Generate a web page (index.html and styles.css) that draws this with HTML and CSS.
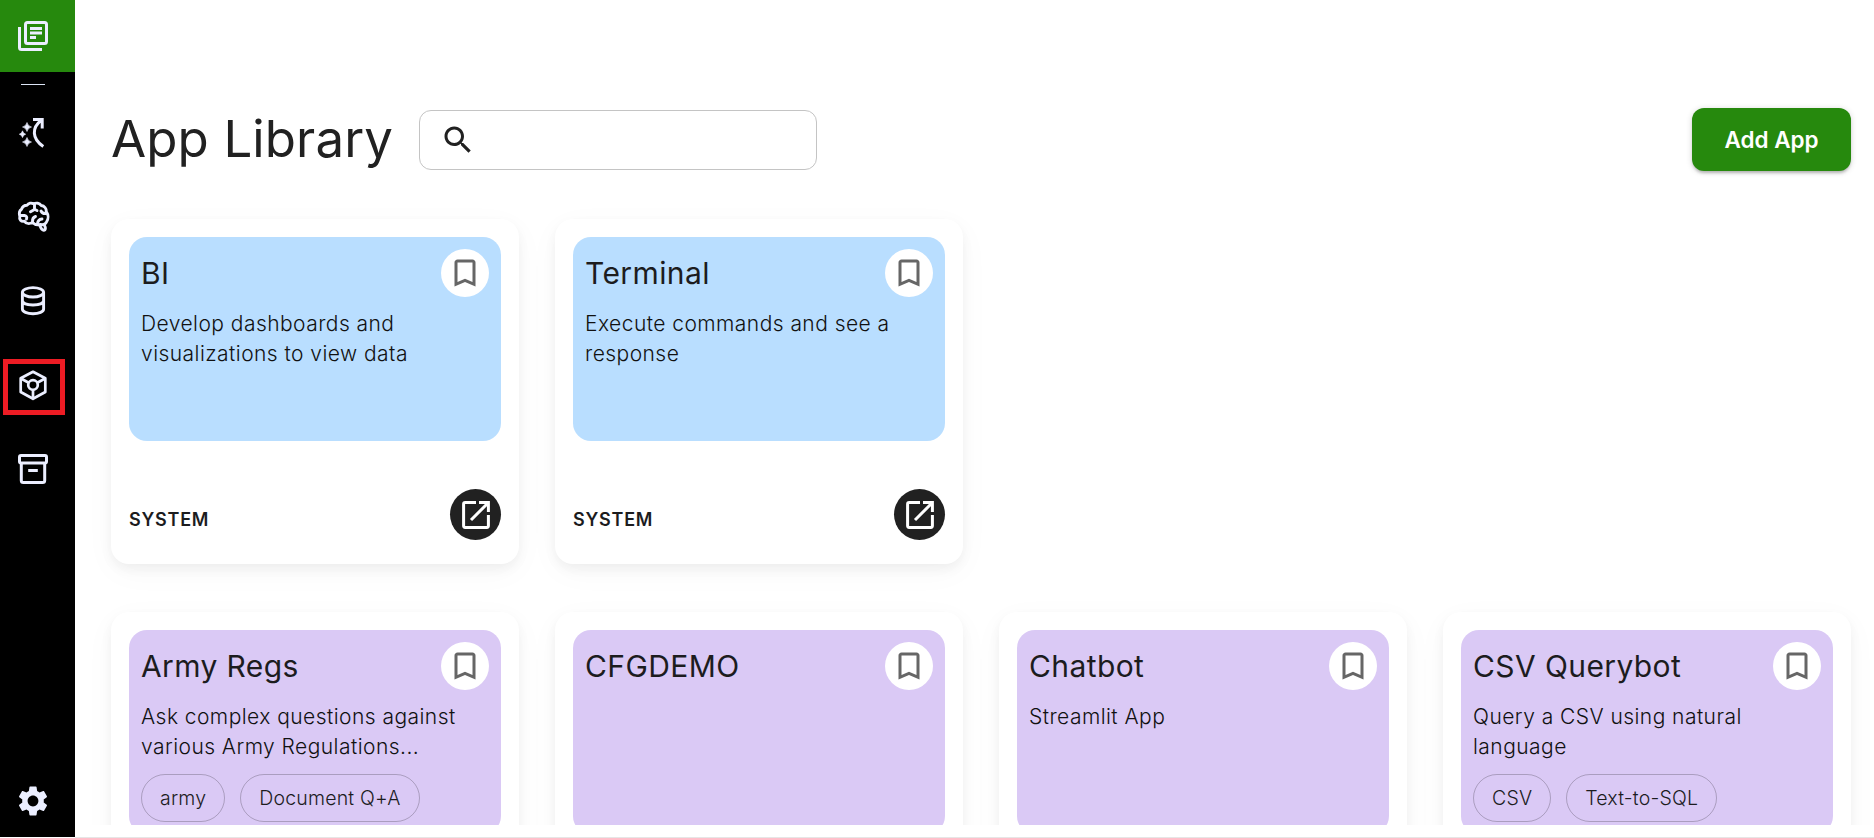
FILE: index.html
```
<!DOCTYPE html>
<html lang="en">
<head>
<meta charset="utf-8">
<title>App Library</title>
<link rel="stylesheet" href="styles.css">
</head>
<body>
<svg class="defs" width="0" height="0">
  <symbol id="bookmark" viewBox="0 0 24 24"><path d="M17 3H7c-1.1 0-2 .9-2 2v16l7-3 7 3V5c0-1.1-.9-2-2-2zm0 15-5-2.18L7 18V5h10v13z"/></symbol>
  <symbol id="launch" viewBox="0 0 28 28"><g fill="none" stroke="#fff" stroke-width="3"><path d="M14 1.6H3.2Q1.6 1.6 1.6 3.2V24.8Q1.6 26.4 3.2 26.4H24.8Q26.4 26.4 26.4 24.8V14"/><path d="M17 1.6H26.4V11M26 2 9 19"/></g></symbol>
</svg>
<div class="app">
  <nav class="sidebar">
    <a class="nav-item active"><svg viewBox="0 0 36 36"><g fill="none" stroke="#ebeeff" stroke-width="3"><path d="M4.5 9V29.5Q4.5 31.5 6.5 31.5H27"/><rect x="10.500" y="4.500" width="21" height="21" rx="2"/><path d="M15 10.500H27M15 15H27M15 19.500H21"/></g></svg></a>
    <span class="divider"></span>
    <a class="nav-item"><svg viewBox="0 0 36 36"><path fill="none" stroke="#ebeeff" stroke-width="3" d="M28.300 31.500C16.500 23.500 17 12.500 26 5.500M18 4.500H27.200V13.500"/><path fill="#ebeeff" stroke="#ebeeff" stroke-width=".6" d="M12 8q.9 3.600 4.500 4.500-3.600.9-4.500 4.500-.9-3.600-4.500-4.500 3.600-.9 4.500-4.500zM12 23q.9 3.600 4.500 4.500-3.600.9-4.500 4.500-.9-3.600-4.500-4.500 3.600-.9 4.500-4.500zM7.500 16.300q.6 2.800 3.200 3.400-2.600.6-3.200 3.400-.6-2.800-3.200-3.400 2.600-.6 3.200-3.400z" transform="translate(0 -.5)"/></svg></a>
    <a class="nav-item"><svg viewBox="0 0 36 36"><g fill="none" stroke="#ebeeff" stroke-width="2.900" stroke-linecap="round" stroke-linejoin="round"><path d="M12 6.200C13.500 4 16.500 3.600 18.500 4.800C21 3.600 24.500 4 26.200 6.500C29.500 7 31.500 9.500 31.300 12.500C33.500 15.500 33.600 20 31.500 23C30.500 25.300 28 26 25.500 25.500C22.500 26.300 19.500 25.500 17.500 23.500C14.500 25 11 24.800 9.500 22.200C6 23 4 20.500 4.800 17.300C4 14.500 4.500 11.500 6.500 10.200C7.500 7.500 9.500 6.200 12 6.200Z"/><path d="M25 27C26 29.500 27 31 28.800 31.200S31 29 29.500 26.500"/><path d="M19.500 5.500V10.500L15.500 12.800M19.500 10.300 22 11.500M5.500 16.500H9.500Q12.500 17 11.500 20M17.500 22.500Q17.300 18.500 20.500 17.500M31 14.500Q27.500 15 26 12M22.500 24.500Q23 20.500 27 20"/></g></svg></a>
    <a class="nav-item"><svg viewBox="0 0 36 36"><g fill="none" stroke="#ebeeff" stroke-width="2.900"><ellipse cx="18" cy="9.300" rx="10.600" ry="4.700"/><path d="M7.400 9.300V26C7.400 28.700 12 30.700 18 30.700S28.600 28.700 28.600 26V9.300M7.400 17.600C7.400 20.300 12 22 18 22S28.600 20.300 28.600 17.600"/></g></svg></a>
    <a class="nav-item outlined"><svg viewBox="0 0 36 36"><g fill="none" stroke="#ebeeff" stroke-width="2.700" stroke-linejoin="round"><path d="M18 4.800 30.300 11.300V25L18 31.800 5.700 25V11.300Z"/><circle cx="18" cy="18" r="4.800"/><path d="M6 11.500 13.700 15.700M30 11.500 22.300 15.700M18 23V31.500"/></g></svg></a>
    <a class="nav-item"><svg viewBox="0 0 36 36"><g fill="none" stroke="#ebeeff" stroke-width="3"><rect x="4.500" y="4.500" width="27" height="7.500" rx="1.500"/><path d="M6.300 12V29.500Q6.300 31.600 8.400 31.600H27.600Q29.700 31.600 29.700 29.500V12M13.200 19.500H22.800"/></g></svg></a>
    <a class="nav-item settings"><svg viewBox="0 0 24 24" fill="#ebeeff"><path d="M19.140 12.940c.04-.3.060-.61.060-.94 0-.32-.02-.64-.07-.94l2.030-1.580c.18-.14.230-.41.120-.61l-1.920-3.320c-.12-.22-.37-.29-.59-.22l-2.390.96c-.5-.38-1.030-.7-1.620-.94l-.36-2.540c-.04-.24-.24-.41-.48-.41h-3.840c-.24 0-.43.170-.47.410l-.36 2.540c-.59.240-1.130.570-1.620.94l-2.390-.96c-.22-.08-.47 0-.59.220L2.740 8.870c-.12.210-.08.470.120.610l2.030 1.580c-.05.300-.09.630-.09.940s.02.640.07.940l-2.030 1.580c-.18.140-.23.410-.12.610l1.920 3.320c.12.220.37.290.59.220l2.390-.96c.5.380 1.030.7 1.620.94l.36 2.540c.05.240.24.410.48.410h3.840c.24 0 .44-.17.470-.41l.36-2.540c.59-.24 1.130-.56 1.620-.94l2.390.96c.22.080.47 0 .59-.22l1.920-3.320c.12-.22.070-.47-.12-.61l-2.010-1.580zM12 15.600c-1.980 0-3.600-1.620-3.600-3.600s1.620-3.600 3.600-3.600 3.600 1.620 3.600 3.600-1.620 3.600-3.600 3.600z"/></svg></a>
  </nav>
  <main class="content">
    <div class="scroll">
      <header class="page-head">
        <h1 class="page-title">App Library</h1>
        <label class="search"><svg viewBox="0 0 24 24"><path fill="#212121" d="M15.500 14h-.79l-.28-.27C15.410 12.590 16 11.110 16 9.500 16 5.910 13.090 3 9.500 3S3 5.910 3 9.500 5.910 16 9.500 16c1.610 0 3.090-.59 4.230-1.570l.27.280v.79l5 4.990L20.490 19l-4.990-5zm-6 0C7.010 14 5 11.990 5 9.500S7.010 5 9.500 5 14 7.010 14 9.500 11.990 14 9.500 14z"/></svg><input class="search-input" type="text" aria-label="Search"></label>
        <button class="add-btn">Add App</button>
      </header>
      <section class="grid">
        <article class="card">
          <div class="tile blue"><div class="tile-head"><h2 class="name">BI</h2><span class="mark"><svg><use href="#bookmark"/></svg></span></div><p class="desc">Develop dashboards and visualizations to view data</p></div>
          <div class="card-foot"><span class="kind">SYSTEM</span><span class="open"><svg><use href="#launch"/></svg></span></div>
        </article>
        <article class="card">
          <div class="tile blue"><div class="tile-head"><h2 class="name">Terminal</h2><span class="mark"><svg><use href="#bookmark"/></svg></span></div><p class="desc">Execute commands and see a response</p></div>
          <div class="card-foot"><span class="kind">SYSTEM</span><span class="open"><svg><use href="#launch"/></svg></span></div>
        </article>
      </section>
      <section class="grid">
        <article class="card">
          <div class="tile purple"><div class="tile-head"><h2 class="name">Army Regs</h2><span class="mark"><svg><use href="#bookmark"/></svg></span></div><p class="desc">Ask complex questions against various Army Regulations...</p><div class="chips"><span class="chip">army</span><span class="chip">Document Q+A</span></div></div>
        </article>
        <article class="card">
          <div class="tile purple"><div class="tile-head"><h2 class="name">CFGDEMO</h2><span class="mark"><svg><use href="#bookmark"/></svg></span></div></div>
        </article>
        <article class="card">
          <div class="tile purple"><div class="tile-head"><h2 class="name">Chatbot</h2><span class="mark"><svg><use href="#bookmark"/></svg></span></div><p class="desc">Streamlit App</p></div>
        </article>
        <article class="card">
          <div class="tile purple"><div class="tile-head"><h2 class="name">CSV Querybot</h2><span class="mark"><svg><use href="#bookmark"/></svg></span></div><p class="desc">Query a CSV using natural language</p><div class="chips"><span class="chip">CSV</span><span class="chip">Text-to-SQL</span></div></div>
        </article>
      </section>
    </div>
  </main>
</div>
</body>
</html>
```
FILE: styles.css
```
* { box-sizing: border-box; }
body { margin: 0; background: #fff; color: #1c1c1e; font-family: Inter, sans-serif; overflow: hidden; }
.defs { display: none; }
.app { display: flex; height: 838px; }
.sidebar { width: 75px; height: 837px; background: #000; display: flex; flex-direction: column; flex: none; }
.nav-item { height: 84px; padding-left: 15px; display: flex; align-items: center; flex: none; }
.nav-item svg { width: 36px; height: 36px; }
.nav-item.active { height: 72px; background: #26890d; }
.divider { width: 24px; height: 1px; margin: 12px 0 6px 21px; background: #dce4f5; flex: none; }
.nav-item.outlined { height: 56px; width: 62px; margin: 16px 0 12px 3px; padding-left: 7px; border: 5px solid #ed1c24; padding-bottom: 4px; }
.nav-item.settings { margin-top: auto; height: 73px; }
.content { flex: 1; height: 838px; padding-bottom: 12px; border-bottom: 1px solid #e6e6e6; }
.scroll { height: 825px; overflow: hidden; padding: 108px 23px 0 36px; }
.page-head { display: flex; align-items: center; height: 63px; margin-bottom: 48px; }
.page-title { margin: -2px 0 0; width: 308px; font-size: 51px; font-weight: 400; line-height: 63px; letter-spacing: .1px; white-space: nowrap; color: #212121; }
.search { display: flex; align-items: center; width: 398px; height: 60px; border: 1px solid #c4c4c4; border-radius: 12px; padding: 0 20px; margin-top: 1px; }
.search svg { width: 36px; height: 36px; flex: none; }
.search-input { flex: 1; min-width: 0; border: 0; outline: 0; background: none; font: 300 21px Inter, sans-serif; }
.add-btn { margin-left: auto; width: 159px; height: 63px; border: 0; border-radius: 12px; background: #26890d; color: #fff; font: 600 22.5px Inter, sans-serif; letter-spacing: -.05px; padding: 0; box-shadow: 0 3px 3px -1px rgba(0,0,0,.22), 0 1px 6px rgba(0,0,0,.16); }
.grid { display: grid; grid-template-columns: repeat(4, 408px); gap: 36px; margin-bottom: 48px; }
.card { height: 345px; padding: 18px; border-radius: 18px; background: #fff; box-shadow: 0 8px 33px rgba(0,0,0,.03), 0 5px 12px rgba(0,0,0,.05); }
.tile { height: 204px; border-radius: 18px; padding: 12px; }
.blue { background: #b9deff; }
.purple { background: #dac9f5; }
.tile-head { display: flex; justify-content: space-between; height: 48px; }
.name { margin: 0; font-size: 30px; font-weight: 400; line-height: 48px; letter-spacing: .4px; white-space: nowrap; }
.mark { width: 48px; height: 48px; border-radius: 50%; background: #fff; display: grid; place-items: center; }
.mark svg { width: 36px; height: 36px; fill: #666; }
.desc { margin: 12px 0 0; font-size: 21px; font-weight: 300; line-height: 30px; letter-spacing: .45px; color: #111; }
.chips { display: flex; gap: 15px; margin-top: 12px; }
.chip { height: 48px; border: 1px solid rgba(0,0,0,.22); border-radius: 24px; padding: 0 18px; font-size: 19.5px; font-weight: 300; line-height: 46px; letter-spacing: .19px; }
.card-foot { display: flex; justify-content: space-between; padding-top: 48px; }
.kind { font-size: 18px; font-weight: 600; line-height: 30px; letter-spacing: .75px; margin-top: 16px; }
.open { width: 51px; height: 51px; border-radius: 50%; background: #212121; display: grid; place-items: center; }
.open svg { width: 28px; height: 28px; }
```
